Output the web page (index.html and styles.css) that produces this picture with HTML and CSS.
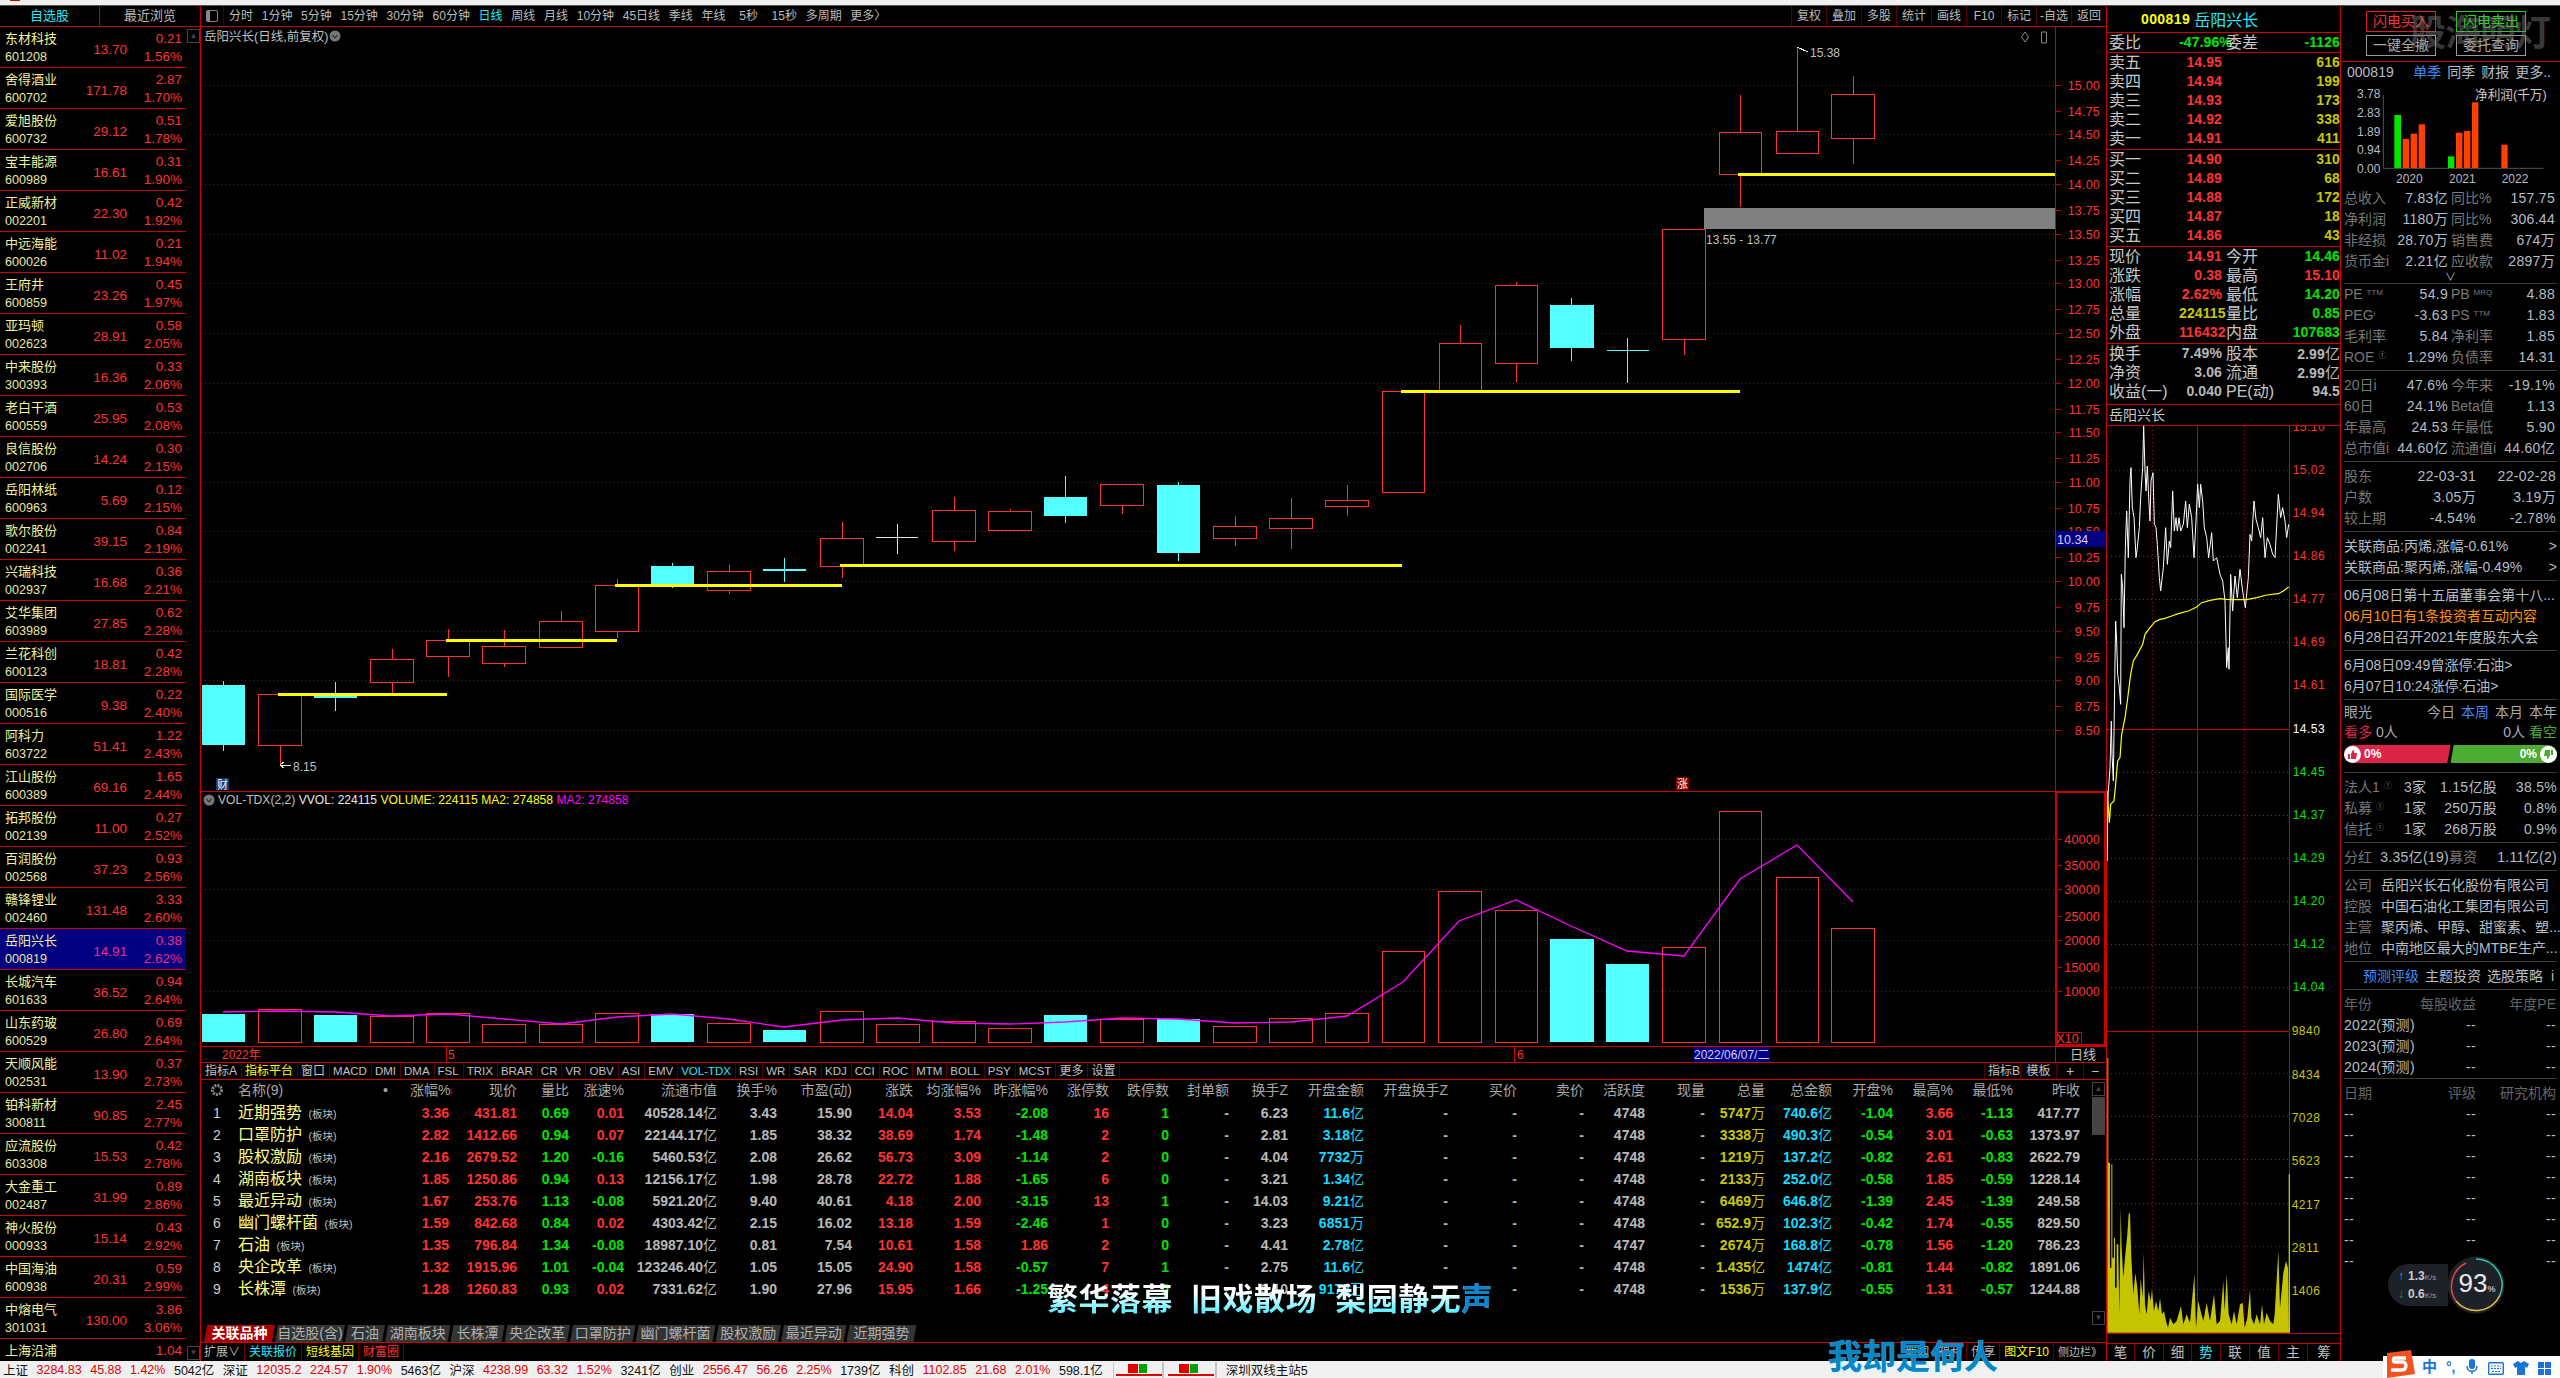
FILE: index.html
```html
<!DOCTYPE html>
<html lang="zh">
<head>
<meta charset="utf-8">
<title>岳阳兴长 日线</title>
<link rel="stylesheet" href="styles.css">
</head>
<body>
<div class="titlebar"><i class="titlemark"></i></div>
<main class="main">

<section class="watch">
  <div class="watch-tabs"><span class="on">自选股</span><span>最近浏览</span></div>
  <div class="watch-body">
    <div class="wl">
      <div class="wr"><span class="n">东材科技</span><span class="k">601208</span><span class="p">13.70</span><span class="c">0.21</span><span class="t">1.56%</span></div>
      <div class="wr"><span class="n">舍得酒业</span><span class="k">600702</span><span class="p">171.78</span><span class="c">2.87</span><span class="t">1.70%</span></div>
      <div class="wr"><span class="n">爱旭股份</span><span class="k">600732</span><span class="p">29.12</span><span class="c">0.51</span><span class="t">1.78%</span></div>
      <div class="wr"><span class="n">宝丰能源</span><span class="k">600989</span><span class="p">16.61</span><span class="c">0.31</span><span class="t">1.90%</span></div>
      <div class="wr"><span class="n">正威新材</span><span class="k">002201</span><span class="p">22.30</span><span class="c">0.42</span><span class="t">1.92%</span></div>
      <div class="wr"><span class="n">中远海能</span><span class="k">600026</span><span class="p">11.02</span><span class="c">0.21</span><span class="t">1.94%</span></div>
      <div class="wr"><span class="n">王府井</span><span class="k">600859</span><span class="p">23.26</span><span class="c">0.45</span><span class="t">1.97%</span></div>
      <div class="wr"><span class="n">亚玛顿</span><span class="k">002623</span><span class="p">28.91</span><span class="c">0.58</span><span class="t">2.05%</span></div>
      <div class="wr"><span class="n">中来股份</span><span class="k">300393</span><span class="p">16.36</span><span class="c">0.33</span><span class="t">2.06%</span></div>
      <div class="wr"><span class="n">老白干酒</span><span class="k">600559</span><span class="p">25.95</span><span class="c">0.53</span><span class="t">2.08%</span></div>
      <div class="wr"><span class="n">良信股份</span><span class="k">002706</span><span class="p">14.24</span><span class="c">0.30</span><span class="t">2.15%</span></div>
      <div class="wr"><span class="n">岳阳林纸</span><span class="k">600963</span><span class="p">5.69</span><span class="c">0.12</span><span class="t">2.15%</span></div>
      <div class="wr"><span class="n">歌尔股份</span><span class="k">002241</span><span class="p">39.15</span><span class="c">0.84</span><span class="t">2.19%</span></div>
      <div class="wr"><span class="n">兴瑞科技</span><span class="k">002937</span><span class="p">16.68</span><span class="c">0.36</span><span class="t">2.21%</span></div>
      <div class="wr"><span class="n">艾华集团</span><span class="k">603989</span><span class="p">27.85</span><span class="c">0.62</span><span class="t">2.28%</span></div>
      <div class="wr"><span class="n">兰花科创</span><span class="k">600123</span><span class="p">18.81</span><span class="c">0.42</span><span class="t">2.28%</span></div>
      <div class="wr"><span class="n">国际医学</span><span class="k">000516</span><span class="p">9.38</span><span class="c">0.22</span><span class="t">2.40%</span></div>
      <div class="wr"><span class="n">阿科力</span><span class="k">603722</span><span class="p">51.41</span><span class="c">1.22</span><span class="t">2.43%</span></div>
      <div class="wr"><span class="n">江山股份</span><span class="k">600389</span><span class="p">69.16</span><span class="c">1.65</span><span class="t">2.44%</span></div>
      <div class="wr"><span class="n">拓邦股份</span><span class="k">002139</span><span class="p">11.00</span><span class="c">0.27</span><span class="t">2.52%</span></div>
      <div class="wr"><span class="n">百润股份</span><span class="k">002568</span><span class="p">37.23</span><span class="c">0.93</span><span class="t">2.56%</span></div>
      <div class="wr"><span class="n">赣锋锂业</span><span class="k">002460</span><span class="p">131.48</span><span class="c">3.33</span><span class="t">2.60%</span></div>
      <div class="wr sel"><span class="n">岳阳兴长</span><span class="k">000819</span><span class="p">14.91</span><span class="c">0.38</span><span class="t">2.62%</span></div>
      <div class="wr"><span class="n">长城汽车</span><span class="k">601633</span><span class="p">36.52</span><span class="c">0.94</span><span class="t">2.64%</span></div>
      <div class="wr"><span class="n">山东药玻</span><span class="k">600529</span><span class="p">26.80</span><span class="c">0.69</span><span class="t">2.64%</span></div>
      <div class="wr"><span class="n">天顺风能</span><span class="k">002531</span><span class="p">13.90</span><span class="c">0.37</span><span class="t">2.73%</span></div>
      <div class="wr"><span class="n">铂科新材</span><span class="k">300811</span><span class="p">90.85</span><span class="c">2.45</span><span class="t">2.77%</span></div>
      <div class="wr"><span class="n">应流股份</span><span class="k">603308</span><span class="p">15.53</span><span class="c">0.42</span><span class="t">2.78%</span></div>
      <div class="wr"><span class="n">大金重工</span><span class="k">002487</span><span class="p">31.99</span><span class="c">0.89</span><span class="t">2.86%</span></div>
      <div class="wr"><span class="n">神火股份</span><span class="k">000933</span><span class="p">15.14</span><span class="c">0.43</span><span class="t">2.92%</span></div>
      <div class="wr"><span class="n">中国海油</span><span class="k">600938</span><span class="p">20.31</span><span class="c">0.59</span><span class="t">2.99%</span></div>
      <div class="wr"><span class="n">中熔电气</span><span class="k">301031</span><span class="p">130.00</span><span class="c">3.86</span><span class="t">3.06%</span></div>
      <div class="wr last"><span class="n">上海沿浦</span><span class="c">1.04</span></div>
    </div>
    <div class="wscroll"><span class="arrowbtn">▲</span><span class="arrowbtn">▼</span></div>
  </div>
</section>

<section class="center">
  <div class="toolbar">
    <span class="tb-icon"><i></i></span>
    <div class="tb-periods">
      <span>分时</span><span>1分钟</span><span>5分钟</span><span>15分钟</span><span>30分钟</span><span>60分钟</span><span class="on">日线</span><span>周线</span><span>月线</span><span>10分钟</span><span>45日线</span><span>季线</span><span>年线</span><span class="wide">5秒</span><span class="wide">15秒</span><span>多周期</span><span>更多〉</span>
    </div>
    <div class="tb-tools"><span>复权</span><span>叠加</span><span>多股</span><span>统计</span><span>画线</span><span>F10</span><span>标记</span><span>-自选</span><span>返回</span></div>
  </div>

  <svg class="charts" viewBox="201 27 1905 1035" width="1905" height="1035" shape-rendering="crispEdges">
    <path class="dot" d="M201 85H2055M201 134H2055M201 184H2055M201 234H2055M201 283H2055M201 333H2055M201 383H2055M201 432H2055M201 482H2055M201 531H2055M201 581H2055M201 631H2055M201 680H2055M201 730H2055M201 839H2055M201 889H2055M201 940H2055M201 991H2055"/>
    <path class="redline" d="M201 791H2106M201 1046H2106M2055 27V1062M2056 85H2061M2056 111H2061M2056 134H2061M2056 160H2061M2056 184H2061M2056 210H2061M2056 234H2061M2056 260H2061M2056 283H2061M2056 309H2061M2056 333H2061M2056 359H2061M2056 383H2061M2056 409H2061M2056 432H2061M2056 458H2061M2056 482H2061M2056 508H2061M2056 531H2061M2056 557H2061M2056 581H2061M2056 607H2061M2056 631H2061M2056 657H2061M2056 680H2061M2056 706H2061M2056 730H2061M2058 839H2062M2058 865H2062M2058 889H2062M2058 916H2062M2058 940H2062M2058 967H2062M2058 991H2062M446 1046V1062M1514 1046V1062"/>
    <rect class="volbox" x="2056" y="792" width="49" height="253"/>
    <rect class="x10box" x="2057" y="1032" width="24" height="13"/>

    <rect class="band" x="1704" y="208" width="351" height="21"/>

    <path class="up" d="M258 694H301V745H258ZM280 745V765M370 659H413V682H370ZM392 649V659M392 682V694M426 640H469V656H426ZM448 629V640M448 656V677M482 646H525V663H482ZM504 630V646M504 663V667M539 621H582V647H539ZM561 611V621M595 585H638V631H595ZM617 579V585M617 631V638M707 571H750V590H707ZM729 565V571M729 590V594M820 538H863V566H820ZM842 522V538M842 566V578M932 510H975V541H932ZM954 497V510M954 541V551M988 511H1031V530H988ZM1010 509V511M1100 484H1143V505H1100ZM1122 505V514M1213 526H1256V538H1213ZM1235 516V526M1235 538V546M1269 518H1312V528H1269ZM1291 498V518M1291 528V549M1325 500H1368V506H1325ZM1347 485V500M1347 506V516M1382 391H1424V492H1382ZM1439 343H1481V391H1439ZM1460 325V343M1495 285H1537V363H1495ZM1516 282V285M1516 363V382M1662 229H1705V339H1662ZM1684 339V355M1719 132H1761V174H1719ZM1740 95V132M1740 174V207M1776 131H1818V153H1776ZM1797 47V131M1831 94H1874V138H1831ZM1853 76V94M1853 138V164"/>
    <path class="dnw" d="M223 681V751M335 682V711M672 563V588M784 558V582M1065 476V523M1178 482V561M1571 298V361M1627 338V383M1607 350H1649"/>
    <path class="dn" d="M202 685H245V745H202ZM314 696H357V698H314ZM651 566H694V585H651ZM763 569H806V571H763ZM1044 497H1087V516H1044ZM1157 485H1200V553H1157ZM1550 305H1594V348H1550Z"/>
    <path class="doji" d="M876 537H918M897 524V554M280 765H291M280 765L284 762M280 765L284 768M1797 47L1808 52"/>
    <path class="yl" d="M278 694.5H447M446 640.5H617M615 585.5H842M840 565.5H1402M1401 391.5H1740M1738 174.5H2055"/>

    <path class="up" d="M258 1009H301V1042H258ZM370 1016H413V1042H370ZM426 1013H469V1042H426ZM482 1024H525V1042H482ZM539 1024H582V1042H539ZM595 1013H638V1042H595ZM707 1023H750V1042H707ZM820 1011H863V1042H820ZM876 1024H919V1042H876ZM932 1021H975V1042H932ZM988 1028H1031V1042H988ZM1100 1019H1143V1042H1100ZM1213 1026H1256V1042H1213ZM1269 1018H1312V1042H1269ZM1325 1013H1368V1042H1325ZM1382 951H1424V1042H1382ZM1438 891H1481V1042H1438ZM1495 910H1537V1042H1495ZM1662 947H1705V1042H1662ZM1719 811H1761V1042H1719ZM1776 877H1818V1042H1776ZM1831 928H1874V1042H1831Z"/>
    <path class="dn" d="M202 1014H245V1042H202ZM314 1015H357V1042H314ZM651 1014H694V1042H651ZM763 1030H806V1042H763ZM1044 1015H1087V1042H1044ZM1157 1019H1200V1042H1157ZM1550 939H1594V1042H1550ZM1606 964H1649V1042H1606Z"/>
    <polyline class="ma" shape-rendering="auto" points="223,1012 280,1011 335,1012 392,1016 448,1014 504,1019 561,1024 617,1017 672,1014 729,1019 784,1027 842,1020 897,1018 954,1023 1010,1024 1065,1022 1122,1018 1178,1019 1235,1023 1291,1022 1347,1016 1403,982 1459,921 1516,900 1571,926 1627,951 1684,956 1740,879 1797,845 1853,902"/>

    <rect class="flagblue" x="216" y="778" width="13" height="12"/><text class="flagtxt" x="222.5" y="789">财</text>
    <rect class="flagred" x="1676" y="777" width="13" height="13"/><text class="flagtxt" x="1682.5" y="788">涨</text>
    <rect class="datebox" x="1693" y="1047" width="77" height="15"/>

    <g shape-rendering="auto">
      <text class="ttl" x="204" y="41">岳阳兴长(日线,前复权)</text>
      <circle class="knob" cx="335" cy="36" r="5.5"/><path class="knobmark" d="M332.5 35l2.5 3 2.5-3"/>
      <path class="ghost" d="M2025 32l3.500 5-3.500 5-3.500-5zM2041.500 32h5v11h-5z"/>
      <text class="lbl" x="1810" y="57">15.38</text>
      <text class="lbl" x="1706" y="244">13.55 - 13.77</text>
      <text class="lbl" x="293" y="771">8.15</text>

      <circle class="knob" cx="209" cy="800" r="5.5"/><path class="knobmark" d="M206.500 799l2.500 3 2.500-3"/>
      <text class="voltt" x="218" y="804"><tspan class="g">VOL-TDX(2,2)</tspan> <tspan class="w">VVOL: 224115</tspan> <tspan class="y">VOLUME: 224115</tspan> <tspan class="y">MA2: 274858</tspan> <tspan class="m">MA2: 274858</tspan></text>

      <g class="ax">
        <text x="2100" y="90">15.00</text><text x="2100" y="116">14.75</text><text x="2100" y="139">14.50</text><text x="2100" y="165">14.25</text><text x="2100" y="189">14.00</text><text x="2100" y="215">13.75</text><text x="2100" y="239">13.50</text><text x="2100" y="265">13.25</text><text x="2100" y="288">13.00</text><text x="2100" y="314">12.75</text><text x="2100" y="338">12.50</text><text x="2100" y="364">12.25</text><text x="2100" y="388">12.00</text><text x="2100" y="414">11.75</text><text x="2100" y="437">11.50</text><text x="2100" y="463">11.25</text><text x="2100" y="487">11.00</text><text x="2100" y="513">10.75</text><text x="2100" y="536">10.50</text><text x="2100" y="562">10.25</text><text x="2100" y="586">10.00</text><text x="2100" y="612">9.75</text><text x="2100" y="636">9.50</text><text x="2100" y="662">9.25</text><text x="2100" y="685">9.00</text><text x="2100" y="711">8.75</text><text x="2100" y="735">8.50</text>
        <text x="2100" y="844">40000</text><text x="2100" y="870">35000</text><text x="2100" y="894">30000</text><text x="2100" y="921">25000</text><text x="2100" y="945">20000</text><text x="2100" y="972">15000</text><text x="2100" y="996">10000</text>
        <text x="2079" y="1043">X10</text>
      </g>
      <rect class="curbox" x="2056" y="531" width="50" height="16"/>
      <text class="curtxt" x="2057" y="544">10.34</text>
      <text class="dax" x="222" y="1059">2022年</text><text class="dax" x="448" y="1059">5</text><text class="dax" x="1517" y="1059">6</text>
      <text class="datetxt" x="1694" y="1059">2022/06/07/二</text>
      <text class="daily" x="2070" y="1059">日线</text>
    </g>
  </svg>

  <div class="indi">
    <div class="indi-l"><span>指标A</span><span class="yel">指标平台</span><span>窗口</span><span>MACD</span><span>DMI</span><span>DMA</span><span>FSL</span><span>TRIX</span><span>BRAR</span><span>CR</span><span>VR</span><span>OBV</span><span>ASI</span><span>EMV</span><span class="cy">VOL-TDX</span><span>RSI</span><span>WR</span><span>SAR</span><span>KDJ</span><span>CCI</span><span>ROC</span><span>MTM</span><span>BOLL</span><span>PSY</span><span>MCST</span><span>更多</span><span>设置</span></div>
    <div class="indi-r"><span>指标B</span><span>模板</span><span class="pm">+</span><span class="pm">−</span></div>
  </div>

  <div class="board">
    <div class="tbl">
      <div class="tr th"><span class="i"><svg class="gear" viewBox="0 0 14 14"><circle cx="7" cy="7" r="4.500"/></svg></span><span class="nm">名称(9)<em class="dotmark">•</em></span><span>涨幅%<em class="sortmark">↓</em></span><span>现价</span><span>量比</span><span>涨速%</span><span>流通市值</span><span>换手%</span><span>市盈(动)</span><span>涨跌</span><span>均涨幅%</span><span>昨涨幅%</span><span>涨停数</span><span>跌停数</span><span>封单额</span><span>换手Z</span><span>开盘金额</span><span>开盘换手Z</span><span>买价</span><span>卖价</span><span>活跃度</span><span>现量</span><span>总量</span><span>总金额</span><span>开盘%</span><span>最高%</span><span>最低%</span><span>昨收</span></div>
      <div class="tr"><span class="i">1</span><span class="nm">近期强势 <small>(板块)</small></span><span class="r">3.36</span><span class="r">431.81</span><span class="g">0.69</span><span class="r">0.01</span><span>40528.14<i>亿</i></span><span>3.43</span><span>15.90</span><span class="r">14.04</span><span class="r">3.53</span><span class="g">-2.08</span><span class="r">16</span><span class="g">1</span><span>-</span><span>6.23</span><span class="c">11.6<i>亿</i></span><span>-</span><span>-</span><span>-</span><span>4748</span><span>-</span><span class="y">5747<i>万</i></span><span class="c">740.6<i>亿</i></span><span class="g">-1.04</span><span class="r">3.66</span><span class="g">-1.13</span><span>417.77</span></div>
      <div class="tr"><span class="i">2</span><span class="nm">口罩防护 <small>(板块)</small></span><span class="r">2.82</span><span class="r">1412.66</span><span class="g">0.94</span><span class="r">0.07</span><span>22144.17<i>亿</i></span><span>1.85</span><span>38.32</span><span class="r">38.69</span><span class="r">1.74</span><span class="g">-1.48</span><span class="r">2</span><span class="g">0</span><span>-</span><span>2.81</span><span class="c">3.18<i>亿</i></span><span>-</span><span>-</span><span>-</span><span>4748</span><span>-</span><span class="y">3338<i>万</i></span><span class="c">490.3<i>亿</i></span><span class="g">-0.54</span><span class="r">3.01</span><span class="g">-0.63</span><span>1373.97</span></div>
      <div class="tr"><span class="i">3</span><span class="nm">股权激励 <small>(板块)</small></span><span class="r">2.16</span><span class="r">2679.52</span><span class="g">1.20</span><span class="g">-0.16</span><span>5460.53<i>亿</i></span><span>2.08</span><span>26.62</span><span class="r">56.73</span><span class="r">3.09</span><span class="g">-1.14</span><span class="r">2</span><span class="g">0</span><span>-</span><span>4.04</span><span class="c">7732<i>万</i></span><span>-</span><span>-</span><span>-</span><span>4748</span><span>-</span><span class="y">1219<i>万</i></span><span class="c">137.2<i>亿</i></span><span class="g">-0.82</span><span class="r">2.61</span><span class="g">-0.83</span><span>2622.79</span></div>
      <div class="tr"><span class="i">4</span><span class="nm">湖南板块 <small>(板块)</small></span><span class="r">1.85</span><span class="r">1250.86</span><span class="g">0.94</span><span class="r">0.13</span><span>12156.17<i>亿</i></span><span>1.98</span><span>28.78</span><span class="r">22.72</span><span class="r">1.88</span><span class="g">-1.65</span><span class="r">6</span><span class="g">0</span><span>-</span><span>3.21</span><span class="c">1.34<i>亿</i></span><span>-</span><span>-</span><span>-</span><span>4748</span><span>-</span><span class="y">2133<i>万</i></span><span class="c">252.0<i>亿</i></span><span class="g">-0.58</span><span class="r">1.85</span><span class="g">-0.59</span><span>1228.14</span></div>
      <div class="tr"><span class="i">5</span><span class="nm">最近异动 <small>(板块)</small></span><span class="r">1.67</span><span class="r">253.76</span><span class="g">1.13</span><span class="g">-0.08</span><span>5921.20<i>亿</i></span><span>9.40</span><span>40.61</span><span class="r">4.18</span><span class="r">2.00</span><span class="g">-3.15</span><span class="r">13</span><span class="g">1</span><span>-</span><span>14.03</span><span class="c">9.21<i>亿</i></span><span>-</span><span>-</span><span>-</span><span>4748</span><span>-</span><span class="y">6469<i>万</i></span><span class="c">646.8<i>亿</i></span><span class="g">-1.39</span><span class="r">2.45</span><span class="g">-1.39</span><span>249.58</span></div>
      <div class="tr"><span class="i">6</span><span class="nm">幽门螺杆菌 <small>(板块)</small></span><span class="r">1.59</span><span class="r">842.68</span><span class="g">0.84</span><span class="r">0.02</span><span>4303.42<i>亿</i></span><span>2.15</span><span>16.02</span><span class="r">13.18</span><span class="r">1.59</span><span class="g">-2.46</span><span class="r">1</span><span class="g">0</span><span>-</span><span>3.23</span><span class="c">6851<i>万</i></span><span>-</span><span>-</span><span>-</span><span>4748</span><span>-</span><span class="y">652.9<i>万</i></span><span class="c">102.3<i>亿</i></span><span class="g">-0.42</span><span class="r">1.74</span><span class="g">-0.55</span><span>829.50</span></div>
      <div class="tr"><span class="i">7</span><span class="nm">石油 <small>(板块)</small></span><span class="r">1.35</span><span class="r">796.84</span><span class="g">1.34</span><span class="g">-0.08</span><span>18987.10<i>亿</i></span><span>0.81</span><span>7.54</span><span class="r">10.61</span><span class="r">1.58</span><span class="r">1.86</span><span class="r">2</span><span class="g">0</span><span>-</span><span>4.41</span><span class="c">2.78<i>亿</i></span><span>-</span><span>-</span><span>-</span><span>4747</span><span>-</span><span class="y">2674<i>万</i></span><span class="c">168.8<i>亿</i></span><span class="g">-0.78</span><span class="r">1.56</span><span class="g">-1.20</span><span>786.23</span></div>
      <div class="tr"><span class="i">8</span><span class="nm">央企改革 <small>(板块)</small></span><span class="r">1.32</span><span class="r">1915.96</span><span class="g">1.01</span><span class="g">-0.04</span><span>123246.40<i>亿</i></span><span>1.05</span><span>15.05</span><span class="r">24.90</span><span class="r">1.58</span><span class="g">-0.57</span><span class="r">7</span><span class="g">1</span><span>-</span><span>2.75</span><span class="c">11.6<i>亿</i></span><span>-</span><span>-</span><span>-</span><span>4748</span><span>-</span><span class="y">1.435<i>亿</i></span><span class="c">1474<i>亿</i></span><span class="g">-0.81</span><span class="r">1.44</span><span class="g">-0.82</span><span>1891.06</span></div>
      <div class="tr"><span class="i">9</span><span class="nm">长株潭 <small>(板块)</small></span><span class="r">1.28</span><span class="r">1260.83</span><span class="g">0.93</span><span class="r">0.02</span><span>7331.62<i>亿</i></span><span>1.90</span><span>27.96</span><span class="r">15.95</span><span class="r">1.66</span><span class="g">-1.25</span><span class="r">4</span><span class="g">0</span><span>-</span><span>3.10</span><span class="c">9172<i>万</i></span><span>-</span><span>-</span><span>-</span><span>4748</span><span>-</span><span class="y">1536<i>万</i></span><span class="c">137.9<i>亿</i></span><span class="g">-0.55</span><span class="r">1.31</span><span class="g">-0.57</span><span>1244.88</span></div>
    </div>
    <div class="tscroll"><span class="arrowbtn">▲</span><span class="thumb"></span><span class="arrowbtn end">▼</span></div>
  </div>

  <div class="stabs"><span class="on">关联品种</span><span class="t70">自选股(含)</span><span>石油</span><span>湖南板块</span><span>长株潭</span><span>央企改革</span><span>口罩防护</span><span>幽门螺杆菌</span><span>股权激励</span><span>最近异动</span><span>近期强势</span></div>
  <div class="bbar">
    <div class="bbar-l"><span>扩展∨</span><span class="cy">关联报价</span><span class="yel">短线基因</span><span class="red">财富圈</span></div>
    <div class="bbar-r"><span>新闻</span><span>福利</span><span>传享</span><span class="yel">图文F10</span><span class="side">侧边栏》</span></div>
  </div>
</section>

<section class="quote">
  <div class="qh"><b>000819</b><span>岳阳兴长</span></div>
  <div class="qs q1">
    <div class="q"><span>委比</span><b class="g">-47.96%</b><span>委差</span><b class="g">-1126</b></div>
  </div>
  <div class="qs">
    <div class="q"><span>卖五</span><b class="r">14.95</b><span></span><b class="y">616</b></div>
    <div class="q"><span>卖四</span><b class="r">14.94</b><span></span><b class="y">199</b></div>
    <div class="q"><span>卖三</span><b class="r">14.93</b><span></span><b class="y">173</b></div>
    <div class="q"><span>卖二</span><b class="r">14.92</b><span></span><b class="y">338</b></div>
    <div class="q"><span>卖一</span><b class="r">14.91</b><span></span><b class="y">411</b></div>
  </div>
  <div class="qs">
    <div class="q"><span>买一</span><b class="r">14.90</b><span></span><b class="y">310</b></div>
    <div class="q"><span>买二</span><b class="r">14.89</b><span></span><b class="y">68</b></div>
    <div class="q"><span>买三</span><b class="r">14.88</b><span></span><b class="y">172</b></div>
    <div class="q"><span>买四</span><b class="r">14.87</b><span></span><b class="y">18</b></div>
    <div class="q"><span>买五</span><b class="r">14.86</b><span></span><b class="y">43</b></div>
  </div>
  <div class="qs">
    <div class="q"><span>现价</span><b class="r">14.91</b><span>今开</span><b class="g">14.46</b></div>
    <div class="q"><span>涨跌</span><b class="r">0.38</b><span>最高</span><b class="r">15.10</b></div>
    <div class="q"><span>涨幅</span><b class="r">2.62%</b><span>最低</span><b class="g">14.20</b></div>
    <div class="q"><span>总量</span><b class="y">224115</b><span>量比</span><b class="g">0.85</b></div>
    <div class="q"><span>外盘</span><b class="r">116432</b><span>内盘</span><b class="g">107683</b></div>
  </div>
  <div class="qs q3">
    <div class="q"><span>换手</span><b>7.49%</b><span>股本</span><b>2.99<i>亿</i></b></div>
    <div class="q"><span>净资</span><b>3.06</b><span>流通</span><b>2.99<i>亿</i></b></div>
    <div class="q"><span>收益(一)</span><b>0.040</b><span>PE(动)</span><b>94.5</b></div>
  </div>
  <div class="mini-title">岳阳兴长</div>
  <svg class="mini" viewBox="171 75 699 2721" width="233" height="907">
    <g shape-rendering="crispEdges">
      <path class="mdot" d="M171 207H718M171 336H718M171 465H718M171 594H718M171 723H718M171 1113H718M171 1242H718M171 1371H718M171 1500H718M171 1629H718M171 1758H718M171 2016H718M171 2145H718M171 2274H718M171 2406H718M171 2535H718M171 2664H718"/>
      <path class="mdot" d="M307 75V2796M584 75V2796"/>
      <path class="msolid" d="M442 75V2796M718 75V2796M171 985H718M171 1891H718"/>
    </g>
    <g transform="translate(0,1440)">
      <polygon class="mvol" points="172,1355 172,530 175,530 175,845 180,845 180,1160 184,1160 184,850 187,850 187,1130 192,1130 192,1070 195,1070 195,1220 200,1220 200,1090 205,1090 205,1110 208,1300 212,980 215,1100 220,1190 226,1120 232,1060 236,1000 240,995 244,1130 250,1240 256,1175 262,1220 268,1300 272,1190 278,1250 281,1115 285,1270 290,1300 296,1230 302,1260 306,1225 312,1290 318,1260 325,1290 330,1250 336,1300 342,1290 348,1320 354,1340 360,1310 370,1330 380,1320 393,1275 400,1330 410,1300 420,1325 433,1180 438,1340 445,1260 452,1290 460,1320 470,1265 480,1320 492,1240 500,1330 510,1320 520,1200 524,1290 530,1180 536,1300 545,1330 552,1290 560,1330 570,1270 578,1265 584,1340 592,1310 600,1225 604,1310 612,1330 620,1300 630,1330 636,1270 642,1330 650,1295 660,1320 670,1330 674,1300 685,1108 690,1280 700,1175 708,1140 714,1160 716,1355 716,880 720,880 720,1355"/>
    </g>
    <polyline class="mline" points="172,1380 173,1200 180,1100 184,960 186,1060 190,1140 195,780 197,660 200,720 203,820 207,850 212,910 214,520 218,560 222,680 226,440 230,330 235,470 240,240 243,200 247,320 252,350 258,470 262,440 268,380 272,290 278,200 281,75 285,210 288,270 292,195 296,290 300,360 303,240 309,215 313,370 318,380 322,430 328,530 332,570 340,500 347,380 352,490 358,420 362,440 368,270 373,390 378,350 382,390 387,350 392,390 400,370 407,300 412,380 418,310 425,350 432,470 438,360 443,250 448,320 452,250 458,300 463,380 470,410 476,470 485,395 490,480 500,470 510,520 518,540 525,600 530,800 535,740 537,805 542,520 548,630 555,525 562,590 570,505 578,570 586,620 595,530 600,400 605,420 612,300 618,355 625,380 632,410 638,350 645,470 652,410 660,430 668,460 675,470 685,280 692,350 698,320 705,360 710,410 716,370"/>
    <polyline class="mavg" points="172,1170 178,1265 182,1210 192,1200 196,1160 203,1080 210,1070 215,1000 225,950 232,900 242,820 250,780 262,760 278,730 285,700 300,680 315,662 330,655 345,652 365,645 385,638 415,630 440,618 455,605 480,598 510,593 530,595 560,596 590,596 620,590 650,582 685,578 700,570 716,558"/>
    <g class="mr"><text x="728" y="90">15.10</text><text x="728" y="219">15.02</text><text x="728" y="348">14.94</text><text x="728" y="477">14.86</text><text x="728" y="606">14.77</text><text x="728" y="734">14.69</text><text x="728" y="864">14.61</text></g>
    <g class="mw"><text x="728" y="996">14.53</text></g>
    <g class="mg"><text x="728" y="1125">14.45</text><text x="728" y="1254">14.37</text><text x="728" y="1383">14.29</text><text x="728" y="1513">14.20</text><text x="728" y="1641">14.12</text><text x="728" y="1770">14.04</text></g>
    <g class="my"><text x="725" y="1902">9840</text><text x="725" y="2033">8434</text><text x="725" y="2162">7028</text><text x="725" y="2291">5623</text><text x="725" y="2423">4217</text><text x="725" y="2553">2811</text><text x="725" y="2681">1406</text></g>
  </svg>
  <div class="mini-gap"></div>
  <div class="qtabs"><span>笔</span><span>价</span><span>细</span><span class="on">势</span><span>联</span><span>值</span><span>主</span><span>筹</span></div>
</section>

<section class="info">
  <div class="trade">
    <span class="btn buy">闪电买入</span><span class="btn sell">闪电卖出</span><span class="btn">一键全撤</span><span class="btn">委托查询</span>
    <span class="wm">股海明灯</span>
  </div>
  <div class="crow"><span class="ccode">000819</span><span class="blue">单季</span><span>同季</span><span>财报</span><span>更多..</span></div>
  <svg class="fin" viewBox="873 249 657 315" width="219" height="105">
    <g class="fax"><text x="921" y="295">3.78</text><text x="921" y="351">2.83</text><text x="921" y="407">1.89</text><text x="921" y="462">0.94</text><text x="921" y="518">0.00</text></g>
    <path class="faxis" d="M1000 285V505H1480"/>
    <text class="ftitle" x="1275" y="296">净利润(千万)</text>
    <g class="fgreen"><rect x="1033" y="345" width="20" height="159"/><rect x="1194" y="469" width="19" height="35"/></g>
    <g class="forange"><rect x="1058" y="417" width="19" height="87"/><rect x="1082" y="401" width="19" height="103"/><rect x="1106" y="373" width="19" height="131"/><rect x="1218" y="398" width="19" height="106"/><rect x="1242" y="393" width="19" height="111"/><rect x="1266" y="307" width="19" height="197"/><rect x="1354" y="434" width="19" height="70"/></g>
    <g class="fyear"><text x="1038" y="549">2020</text><text x="1197" y="549">2021</text><text x="1355" y="549">2022</text></g>
  </svg>
  <div class="rows">
    <div class="r4"><span>总收入</span><b>7.83亿</b><span>同比%</span><b>157.75</b></div>
    <div class="r4"><span>净利润</span><b>1180万</b><span>同比%</span><b>306.44</b></div>
    <div class="r4"><span>非经损</span><b>28.70万</b><span>销售费</span><b>674万</b></div>
    <div class="r4"><span>货币金i</span><b>2.21亿</b><span>应收款</span><b>2897万</b></div>
    <div class="chev">∨</div>
  </div>
  <div class="sec flush">
    <div class="r4"><span>PE <sup>TTM</sup></span><b>54.9</b><span>PB <sup>MRQ</sup></span><b>4.88</b></div>
    <div class="r4"><span>PEG<sup>i</sup></span><b>-3.63</b><span>PS <sup>TTM</sup></span><b>1.83</b></div>
    <div class="r4"><span>毛利率</span><b>5.84</b><span>净利率</span><b>1.85</b></div>
    <div class="r4"><span>ROE <sup>①</sup></span><b>1.29%</b><span>负债率</span><b>14.31</b></div>
  </div>
  <div class="sec">
    <div class="r4"><span>20日i</span><b>47.6%</b><span>今年来</span><b>-19.1%</b></div>
    <div class="r4"><span>60日</span><b>24.1%</b><span>Beta值</span><b>1.13</b></div>
    <div class="r4"><span>年最高</span><b>24.53</b><span>年最低</span><b>5.90</b></div>
    <div class="r4"><span>总市值i</span><b>44.60亿</b><span>流通值i</span><b>44.60亿</b></div>
  </div>
  <div class="sec">
    <div class="r3"><span>股东</span><b>22-03-31</b><b>22-02-28</b></div>
    <div class="r3"><span>户数</span><b>3.05万</b><b>3.19万</b></div>
    <div class="r3"><span>较上期</span><b>-4.54%</b><b>-2.78%</b></div>
  </div>
  <div class="sec">
    <div class="line"><span>关联商品:丙烯,涨幅-0.61%</span><span>&gt;</span></div>
    <div class="line"><span>关联商品:聚丙烯,涨幅-0.49%</span><span>&gt;</span></div>
  </div>
  <div class="sec">
    <div class="line"><span>06月08日第十五届董事会第十八...</span></div>
    <div class="line orange"><span>06月10日有1条投资者互动内容</span></div>
    <div class="line"><span>6月28日召开2021年度股东大会</span></div>
  </div>
  <div class="sec">
    <div class="line"><span>6月08日09:49曾涨停:石油&gt;</span></div>
    <div class="line"><span>6月07日10:24涨停:石油&gt;</span></div>
  </div>
  <div class="sec eye">
    <div class="eye1"><span>眼光</span><div class="eyetabs"><span>今日</span><span class="blue">本周</span><span>本月</span><span>本年</span></div></div>
    <div class="eye2"><span><em class="dup">看多</em> 0人</span><span>0人 <em class="ddn">看空</em></span></div>
    <div class="votebar">
      <div class="vote vup"><svg class="thumbic" viewBox="0 0 17 17"><circle cx="8.500" cy="8.500" r="8.500"/><path d="M4 8h2v5H4zM7 8l2-4c1 0 1.500 1 1 3h3l-1 6H7z"/></svg>0%</div>
      <div class="vote vdn">0%<svg class="thumbic g" viewBox="0 0 17 17"><circle cx="8.500" cy="8.500" r="8.500"/><path d="M13 9h-2V4h2zM10 9l-2 4c-1 0-1.500-1-1-3H4l1-6h5z"/></svg></div>
    </div>
  </div>
  <div class="sec">
    <div class="r5"><span>法人1 <sup>①</sup></span><b>3家</b><b>1.15亿股</b><b>38.5%</b></div>
    <div class="r5"><span>私募 <sup>①</sup></span><b>1家</b><b>250万股</b><b>0.8%</b></div>
    <div class="r5"><span>信托 <sup>①</sup></span><b>1家</b><b>268万股</b><b>0.9%</b></div>
  </div>
  <div class="sec">
    <div class="rdiv"><span>分红</span><b>3.35亿(19)</b><span>募资</span><b>1.11亿(2)</b></div>
  </div>
  <div class="sec">
    <div class="rt"><span>公司</span><b>岳阳兴长石化股份有限公司</b></div>
    <div class="rt"><span>控股</span><b>中国石油化工集团有限公司</b></div>
    <div class="rt"><span>主营</span><b>聚丙烯、甲醇、甜蜜素、塑...</b></div>
    <div class="rt"><span>地位</span><b>中南地区最大的MTBE生产...</b></div>
  </div>
  <div class="sec">
    <div class="fc"><span class="blue">预测评级</span><span>主题投资</span><span>选股策略</span><span class="fci">i</span></div>
  </div>
  <div class="sec tight">
    <div class="r3 hd"><span>年份</span><span>每股收益</span><span>年度PE</span></div>
    <div class="r3"><b class="yr">2022(预测)</b><b>--</b><b>--</b></div>
    <div class="r3"><b class="yr">2023(预测)</b><b>--</b><b>--</b></div>
    <div class="r3"><b class="yr">2024(预测)</b><b>--</b><b>--</b></div>
  </div>
  <div class="sec">
    <div class="r3 hd"><span>日期</span><span>评级</span><span>研究机构</span></div>
    <div class="r3"><b class="dash">--</b><b>--</b><b>--</b></div>
    <div class="r3"><b class="dash">--</b><b>--</b><b>--</b></div>
    <div class="r3"><b class="dash">--</b><b>--</b><b>--</b></div>
    <div class="r3"><b class="dash">--</b><b>--</b><b>--</b></div>
    <div class="r3"><b class="dash">--</b><b>--</b><b>--</b></div>
    <div class="r3"><b class="dash">--</b><b>--</b><b>--</b></div>
    <div class="r3"><b class="dash">--</b><b>--</b><b>--</b></div>
    <div class="r3"><b class="dash">--</b><b>--</b><b>--</b></div>
  </div>
</section>
</main>

<footer class="status">
  <span class="s">上证</span><span class="v">3284.83</span><span class="v">45.88</span><span class="v">1.42%</span><span class="s">5042亿</span>
  <span class="s">深证</span><span class="v">12035.2</span><span class="v">224.57</span><span class="v">1.90%</span><span class="s">5463亿</span>
  <span class="s">沪深</span><span class="v">4238.99</span><span class="v">63.32</span><span class="v">1.52%</span><span class="s">3241亿</span>
  <span class="s">创业</span><span class="v">2556.47</span><span class="v">56.26</span><span class="v">2.25%</span><span class="s">1739亿</span>
  <span class="s">科创</span><span class="v">1102.85</span><span class="v">21.68</span><span class="v">2.01%</span><span class="s">598.1亿</span>
  <svg class="leds" viewBox="0 0 104 16" width="104" height="16">
    <path class="ledbox" d="M0 0V16M50 0V16M103 0V16"/>
    <path class="ledr" d="M15 2h10v9H15zM3 12h46v2H3zM66 2h10v9H66zM55 12h46v2H55z"/>
    <path class="ledg" d="M26 2h8v9h-8zM77 2h8v9h-8z"/>
  </svg>
  <span class="s">深圳双线主站5</span>
</footer>

<div class="lyric1">繁华落幕 旧戏散场 梨园静无<span class="lyric-tail">声</span></div>
<div class="lyric2">我却是何人</div>

<div class="netwidget">
  <div class="netpill"><div><em class="nup">↑</em><b>1.3</b><small>K/s</small></div><div><em class="ndn">↓</em><b>0.6</b><small>K/s</small></div></div>
  <div class="netdial"><svg viewBox="0 0 58 58" width="58" height="58"><circle class="d0" cx="29" cy="29" r="28.500"/><path class="d1" d="M29 3a26 26 0 0 1 24 36"/><path class="d2" d="M53 39a26 26 0 0 1-44 6"/><path class="d3" d="M9 45a26 26 0 0 1 10-38"/></svg><span class="dialtxt">93<small>%</small></span></div>
</div>

<div class="ime">
  <svg class="ime-s" viewBox="0 0 32 28" width="32" height="28"><path d="M4 3l24-3 4 24-28 4z" fill="#f1521e"/><path d="M23 8H12c-2 0-2 4 0 4h8c4 0 4 8-1 8H8" fill="none" stroke="#fff" stroke-width="3.500"/></svg>
  <span class="ime-z">中</span><span class="ime-p">°,</span>
  <svg viewBox="0 0 14 16" width="14" height="16"><rect x="4" y="0" width="6" height="10" rx="3" fill="#1a73d9"/><path d="M2 7c0 7 10 7 10 0M7 12v3" stroke="#1a73d9" fill="none" stroke-width="1.500"/></svg>
  <svg viewBox="0 0 16 13" width="16" height="13"><rect x=".7" y=".7" width="14.600" height="11.600" rx="1" fill="none" stroke="#1a73d9" stroke-width="1.400"/><path d="M3 4h10M3 6.500h10M4 9.500h8" stroke="#1a73d9" stroke-dasharray="2 1"/></svg>
  <svg viewBox="0 0 16 14" width="16" height="14"><path d="M5 0L0 3l2 4 2-1v8h8V6l2 1 2-4-5-3-3 2z" fill="#1a73d9"/></svg>
  <svg viewBox="0 0 13 13" width="13" height="13"><path d="M0 0h6v6H0zM7 0h6v6H7zM0 7h6v6H0zM7 7h6v6H7z" fill="#1a73d9"/></svg>
</div>
</body>
</html>
```
FILE: styles.css
```css
* { box-sizing: border-box; }
html, body { margin: 0; padding: 0; }
body {
  width: 2560px; height: 1378px; overflow: hidden; position: relative;
  background: #000; color: #c0c0c0;
  font-family: "Liberation Sans", "Noto Sans CJK SC", sans-serif;
  display: grid; grid-template-rows: 6px 1355px 17px;
}
em, i { font-style: normal; }

.titlebar { background: #f0f0f0; border-bottom: 1px solid #555; }
.titlemark { display: block; width: 10px; height: 1px; margin-left: 10px; background: #c00; }
.main { display: grid; grid-template-columns: 201px 1906px 234px 219px; min-height: 0; }

/* watchlist */
.watch { border-right: 1px solid #c00; display: flex; flex-direction: column; min-height: 0; overflow: hidden; }
.watch-tabs { height: 21px; flex: none; border-bottom: 1px solid #c00; display: grid; grid-template-columns: 100px 1fr; text-align: center; font-size: 13px; line-height: 20px; color: #bbb; }
.watch-tabs span:first-child { border-right: 1px solid #c00; }
.watch-tabs .on { color: #29e6ff; }
.watch-body { flex: 1; display: flex; min-height: 0; }
.wl { width: 186px; flex: none; }
.wr {
  height: 41px; border-bottom: 1px solid #c00; padding: 3px 4px 0 5px;
  display: grid; grid-template-columns: 67px 55px 55px; grid-template-rows: 18px 18px; line-height: 18px;
  font-size: 13.5px; color: #ff3232;
}
.wr .n { grid-area: 1 / 1; color: #f2f29a; font-size: 13px; white-space: nowrap; }
.wr .k { grid-area: 2 / 1; color: #e8e8a0; font-size: 12.600px; }
.wr .p { grid-area: 1 / 2 / 3 / 2; text-align: right; padding-top: 3px; align-self: center; }
.wr .c { grid-area: 1 / 3; text-align: right; }
.wr .t { grid-area: 2 / 3; text-align: right; }
.wr.sel { background: #000080; color: #f0288c; }
.wr.last { height: 22px; border-bottom: 0; grid-template-rows: 18px; }
.wscroll { flex: 1; display: flex; flex-direction: column; justify-content: space-between; padding: 2px 1px 1px 1px; }
.arrowbtn { display: block; width: 13px; height: 14px; flex: none; border: 1px solid #444; color: #444; font-size: 8px; line-height: 12px; text-align: center; }

/* center */
.center { border-right: 1px solid #c00; display: flex; flex-direction: column; min-height: 0; overflow: hidden; }
.toolbar { height: 21px; flex: none; border-bottom: 1px solid #c00; display: flex; align-items: stretch; font-size: 12px; line-height: 20px; color: #bbb; }
.tb-icon { width: 23px; border-right: 1px solid #400; display: flex; align-items: center; justify-content: center; }
.tb-icon i { width: 12px; height: 12px; border: 1px solid #888; border-left-width: 4px; border-radius: 2px; }
.tb-periods { display: flex; gap: 8.700px; padding-left: 5px; flex: 1; white-space: nowrap; }
.tb-periods .on { color: #29e6ff; }
.tb-periods .wide { margin-left: 5px; }
.tb-tools { display: grid; grid-template-columns: repeat(9, 35px); text-align: center; }
.tb-tools span { border-left: 1px solid #500; }

.charts { display: block; flex: none; }
.dot { fill: none; stroke: #b00000; stroke-dasharray: 1 3; }
.redline { fill: none; stroke: #c00; }
.volbox { fill: none; stroke: #c00; stroke-width: 2; }
.x10box { fill: none; stroke: #c00; }
.band { fill: #808080; }
.yl { fill: none; stroke: #ff0; stroke-width: 3; }
.up { fill: none; stroke: #ff3232; }
.dn { fill: #54ffff; }
.dnw { fill: none; stroke: #54ffff; }
.doji { fill: none; stroke: #e8e8e8; }
.ma { fill: none; stroke: #ff00ff; stroke-width: 1.300; }
.flagblue { fill: #0a3c78; }
.flagred { fill: #800000; }
.flagtxt { fill: #fff; font-size: 11px; text-anchor: middle; }
.datebox { fill: #000080; }
.ttl { fill: #c0c0c0; font-size: 12.500px; }
.knob { fill: #777; }
.knobmark { fill: none; stroke: #111; }
.ghost { fill: none; stroke: #888; }
.lbl { fill: #c0c0c0; font-size: 12px; }
.voltt { font-size: 12.100px; }
.voltt .g { fill: #c0c0c0; } .voltt .w { fill: #e8e8e8; } .voltt .y { fill: #ff0; } .voltt .m { fill: #ff00ff; }
.ax text { fill: #ff3232; font-size: 12.500px; text-anchor: end; letter-spacing: .2px; }
.curbox { fill: #000080; }
.curtxt { fill: #d0d0ff; font-size: 12.500px; }
.dax { fill: #ff3232; font-size: 12px; }
.datetxt { fill: #d0d0ff; font-size: 12px; }
.daily { fill: #c0c0c0; font-size: 13px; }

.indi { height: 18px; flex: none; border-top: 1px solid #c00; border-bottom: 1px solid #c00; display: flex; justify-content: space-between; font-size: 11.500px; line-height: 16px; color: #c0c0c0; white-space: nowrap; }
.indi-l { display: flex; padding-left: 1px; }
.indi-l span { padding: 0 4px 0 3px; border-right: 1px solid #500; }
.indi-l span:nth-child(-n+3), .indi-l span:nth-last-child(-n+2) { font-size: 12px; }
.yel { color: #ff0 !important; }
.cy { color: #29e6ff !important; }
.red { color: #ff3232 !important; }
.indi-r { display: flex; font-size: 12px; }
.indi-r span { padding: 0 3px; border-left: 1px solid #500; width: 36px; text-align: center; }
.indi-r .pm { width: 27px; font-size: 14px; }
.indi-r .pm + .pm { width: 23px; }

.board { flex: 1; display: flex; min-height: 0; }
.tbl { width: 1889px; flex: none; font-size: 14px; font-weight: 700; color: #b8b8b8; }
.tr {
  display: grid; height: 22px; line-height: 22px; white-space: nowrap;
  grid-template-columns: 32px 177px 39px 68px 52px 55px 93px 60px 75px 61px 68px 67px 61px 60px 60px 59px 76px 84px 69px 67px 61px 60px 60px 67px 61px 60px 60px 67px;
}
.tr > span { text-align: right; overflow: visible; }
.tr > .i { text-align: center; color: #d0d0d0; font-weight: 400; }
.tr > .nm { text-align: left; padding-left: 5px; color: #ffff80; font-size: 16px; font-weight: 400; }
.tr small { font-size: 10.500px; color: #c0c0c0; margin-left: 2px; }
.tr i { font-weight: 400; }
.tr .r { color: #ff3232; } .tr .g { color: #00e600; } .tr .c { color: #10dcff; } .tr .y { color: #c8c800; }
.th { font-weight: 400; color: #a8a8a8; line-height: 21px; }
.th > .nm { font-size: 14px; color: #a8a8a8; position: relative; }
.dotmark { position: absolute; left: 150px; }
.sortmark { position: absolute; color: #e00; margin-left: -3px; font-size: 12px; }
.gear { width: 14px; height: 14px; vertical-align: -2px; }
.gear circle { fill: none; stroke: #888; stroke-width: 3; stroke-dasharray: 2 1; }
.tscroll { flex: 1; display: flex; flex-direction: column; padding: 2px 0 0 2px; }
.thumb { width: 13px; height: 38px; background: #444; margin-top: 1px; flex: none; }
.tscroll .end { margin-top: auto; }

.stabs { height: 17px; flex: none; display: flex; padding-left: 3px; font-size: 14px; line-height: 17px; color: #b0b0b0; white-space: nowrap; }
.stabs span { padding: 0 2px; background: #333; clip-path: polygon(3px 0, 100% 0, calc(100% - 3px) 100%, 0 100%); width: 65.500px; text-align: center; overflow: hidden; }
.stabs .on { background: #a80000; color: #fff; font-weight: 700; width: 71px; }
.stabs span.t70 { width: 70px; }
.stabs span:nth-child(3) { width: 40px; }
.stabs span:nth-child(5) { width: 54px; }
.stabs span:nth-child(8) { width: 80px; }
.stabs span:nth-child(11) { width: 70px; }
.bbar { flex: none; height: 19px; border-top: 1px solid #c00; display: flex; justify-content: space-between; font-size: 12px; line-height: 18px; color: #bbb; white-space: nowrap; }
.bbar-l, .bbar-r { display: flex; }
.bbar span { padding: 0 4px; border-right: 1px solid #600; }
.bbar-l span:first-child { padding-left: 3px; width: 44px; }
.bbar-r .side { width: 52px; padding: 0 4px; border-right: 0; font-size: 11px; }

/* quote */
.quote { border-right: 1px solid #c00; display: flex; flex-direction: column; min-height: 0; overflow: hidden; }
.qh { height: 27px; flex: none; border-bottom: 1px solid #c00; display: flex; align-items: center; padding-left: 34px; gap: 4px; }
.qh b { color: #ff0; font-size: 14px; letter-spacing: .4px; }
.qh span { color: #29e6ff; font-size: 16px; }
.qs { flex: none; border-bottom: 1px solid #c00; padding-bottom: 1px; }
.q1 { padding-bottom: 0; }
.q3 { padding-bottom: 3px; }
.q { height: 19px; line-height: 19px; display: grid; grid-template-columns: 70px 43px 50px 68px; white-space: nowrap; padding-left: 2px; }
.q span { font-size: 16px; color: #c8c8c8; }
.q span:nth-child(3) { padding-left: 4px; }
.q b { font-size: 14px; text-align: right; color: #b8b8b8; letter-spacing: .1px; }
.q b i { font-weight: 400; font-size: 15px; }
.q .r { color: #ff3232; } .q .g { color: #00e600; } .q .y { color: #c8c800; }
.mini-title { flex: none; height: 21px; border-bottom: 1px solid #c00; font-size: 14px; line-height: 20px; padding-left: 2px; color: #c8c8c8; }
.mini { display: block; flex: none; }
.mdot { fill: none; stroke: #c00; stroke-width: 3; stroke-dasharray: 3 9; }
.msolid { fill: none; stroke: #c00; stroke-width: 3; }
.mvol { fill: #c4c400; }
.mline { fill: none; stroke: #fff; stroke-width: 3; }
.mavg { fill: none; stroke: #ff0; stroke-width: 3.600; }
.mini text { font-size: 36px; letter-spacing: 1.500px; }
.mr text { fill: #ff3232; } .mw text { fill: #fff; } .mg text { fill: #00e600; } .my text { fill: #c8c800; }
.mini-gap { height: 10px; flex: none; border-top: 1px solid #c00; }
.qtabs { flex: 1; border-top: 1px solid #c00; display: grid; grid-template-columns: 28px 29px 28px 29px 29px 29px 29px 1fr; font-size: 13.500px; line-height: 18px; text-align: center; color: #c0c0c0; }
.qtabs span { border-right: 1px solid #700; }
.qtabs span:last-child { border-right: 0; }
.qtabs .on { color: #29e6ff; }

/* info */
.info { min-height: 0; overflow: hidden; padding: 0 3px; font-size: 14px; color: #b4bdc8; }
.trade { height: 56px; margin: 0 -3px; padding: 5px 33px 0 25px; border-bottom: 1px solid #c00; display: grid; grid-template-columns: 70px 70px; grid-template-rows: 21px 21px; gap: 3px 20px; position: relative; }
.btn { border: 1px solid #999; color: #aaa; font-size: 14px; line-height: 19px; text-align: center; }
.buy { border-color: #e02020; color: #ff3232; }
.sell { border-color: #20d020; color: #20e020; }
.wm { position: absolute; left: 69px; top: 6px; font-size: 36px; line-height: 44px; font-weight: 700; color: rgba(130,130,130,.45); letter-spacing: -1px; white-space: nowrap; }
.crow { height: 21px; line-height: 21px; display: flex; color: #b4bdc8; white-space: nowrap; }
.crow span { margin-right: 6px; }
.crow .ccode { width: 67px; margin: 0 0 0 3px; }
.blue { color: #3c8cff !important; }
.fin { display: block; margin-left: -3px; }
.fax text { fill: #b4bdc8; font-size: 36px; }
.faxis { fill: none; stroke: #555; stroke-width: 3; }
.ftitle { fill: #c8c8c8; font-size: 38px; }
.fgreen rect { fill: #00e600; }
.forange rect { fill: #ff4000; }
.fyear text { fill: #b4bdc8; font-size: 36px; }
.r4, .r3, .r5, .rdiv, .rt, .line, .fc, .eye1 { height: 21px; line-height: 21px; white-space: nowrap; }
.r4 { display: grid; grid-template-columns: 40px 64px 46px 61px; }
.r4 span, .r3 span, .r5 span, .rdiv span, .rt span { color: #787878; }
.r4 b, .r3 b, .r5 b, .rdiv b { font-weight: 400; text-align: right; letter-spacing: .3px; }
.r4 span:nth-child(3) { padding-left: 3px; }
sup { font-size: 8px; vertical-align: 4px; line-height: 0; }
.chev { height: 11px; line-height: 10px; text-align: center; font-size: 11px; }
.sec { border-top: 1px solid #3c3c3c; padding: 4px 0 2px; }
.flush { padding-top: 0; }
.tight { padding-bottom: 0; }
.r3 { display: grid; grid-template-columns: 60px 72px 80px; }
.r3.hd span { color: #666; }
.r3 span:not(:first-child) { text-align: right; }
.r3 .yr { text-align: left; font-size: 14px; white-space: nowrap; }
.dash { text-align: left !important; }
.line { display: flex; justify-content: space-between; font-size: 14px; }
.orange { color: #ff9400; }
.eye { padding-top: 2px; padding-bottom: 9px; }
.eye1 { display: flex; justify-content: space-between; color: #aaa; }
.eyetabs { display: flex; gap: 6px; }
.eye2 { height: 18px; line-height: 18px; margin-bottom: 4px; display: flex; justify-content: space-between; color: #aab; }
.dup { color: #dc2348; } .ddn { color: #4bab32; }
.votebar { height: 18px; display: flex; gap: 2px; font-size: 12px; font-weight: 700; color: #fff; line-height: 18px; }
.vote { display: flex; align-items: center; gap: 3px; }
.vup { width: 107px; background: #dc2348; border-radius: 9px 0 0 9px; clip-path: polygon(0 0, 100% 0, 97% 100%, 0 100%); }
.vdn { width: 107px; margin-left: -2px; background: #4bab32; justify-content: flex-end; border-radius: 0 9px 9px 0; clip-path: polygon(3% 0, 100% 0, 100% 100%, 0 100%); }
.thumbic { width: 17px; height: 17px; fill: #fff; flex: none; }
.thumbic path { fill: #dc2348; }
.thumbic.g path { fill: #4bab32; }
.r5 { display: grid; grid-template-columns: 60px 21px 72px 60px; }
.r5 b:nth-child(2) { text-align: left; }
.rdiv { display: grid; grid-template-columns: 30px 75px 35px 73px; }
.rt { display: grid; grid-template-columns: 37px 1fr; }
.rt b { font-weight: 400; }
.fc { display: flex; gap: 6px; padding-left: 19px; }
.fci { margin-left: 2px; }

/* status */
.status { background: #f0f0f0; color: #111; display: flex; align-items: center; gap: 8.500px; padding-left: 3px; font-size: 12.500px; white-space: nowrap; overflow: hidden; }
.status .v { color: #e00000; }
.leds { margin: 0 0 0 2px; flex: none; }
.ledbox { fill: none; stroke: #999; }
.ledr { fill: #e00000; }
.ledg { fill: #00a000; }

/* overlays */
.lyric1 { position: absolute; left: 1047px; top: 1281px; font-size: 31px; line-height: 38px; font-weight: 700; white-space: pre; word-spacing: 9px; color: transparent; background: linear-gradient(180deg, #fff 30%, #5ff0ff 80%); -webkit-background-clip: text; background-clip: text; letter-spacing: .5px; }
.lyric-tail { color: #0a86d0; -webkit-text-fill-color: #0a86d0; }
.lyric2 { position: absolute; left: 1828px; top: 1336px; font-size: 34px; line-height: 42px; font-weight: 700; color: #0a86c8; text-shadow: 0 0 1px #6ff; white-space: nowrap; }
.netwidget { position: absolute; left: 2388px; top: 1256px; display: flex; align-items: center; }
.netpill { width: 60px; height: 42px; background: #1d2228; border-radius: 21px 0 0 21px; padding: 4px 0 0 10px; font-size: 12px; color: #c8ccd0; line-height: 17px; margin-right: -1px; white-space: nowrap; }
.netpill b { font-weight: 700; margin-left: 4px; }
.netpill small { font-size: 8px; color: #99a; }
.nup { color: #29a0ff; } .ndn { color: #2ca02c; }
.netdial { position: relative; width: 58px; height: 58px; }
.netdial svg { display: block; }
.d0 { fill: #1d2228; }
.d1 { fill: none; stroke: #37c8a8; stroke-width: 1.500; }
.d2 { fill: none; stroke: #e8c040; stroke-width: 1.500; }
.d3 { fill: none; stroke: #e04848; stroke-width: 1.500; }
.dialtxt { position: absolute; inset: 0; text-align: center; line-height: 55px; font-size: 26px; color: #e8e8e8; padding-left: 2px; }
.dialtxt small { font-size: 9px; }
.ime { position: absolute; left: 2383px; top: 1351px; width: 177px; height: 27px; display: flex; align-items: flex-end; gap: 9px; padding: 0 2px 3px 0; color: #1a73d9; background: linear-gradient(180deg, transparent 5px, #fff 5px); font-size: 15px; line-height: 16px; font-weight: 700; }
.ime-s { margin-bottom: -3px; margin-right: -2px; }
.ime-p { font-size: 14px; }
```
